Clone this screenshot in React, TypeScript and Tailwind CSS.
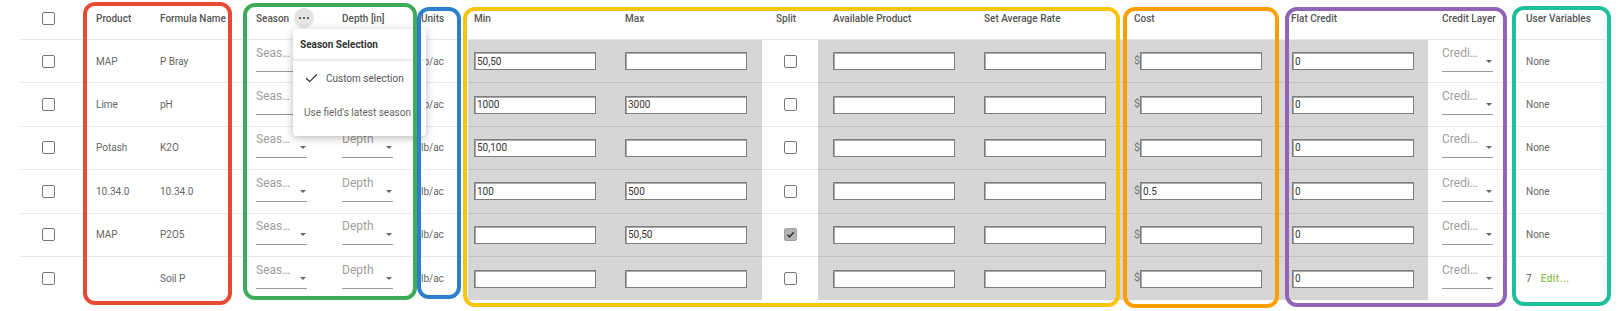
import { Check } from "lucide-react";

type Row = {
  product: string;
  formula: string;
  min: string;
  max: string;
  split: boolean;
  cost: string;
  vars: string;
};

const rows: Row[] = [
  { product: "MAP", formula: "P Bray", min: "50,50", max: "", split: false, cost: "", vars: "None" },
  { product: "Lime", formula: "pH", min: "1000", max: "3000", split: false, cost: "", vars: "None" },
  { product: "Potash", formula: "K2O", min: "50,100", max: "", split: false, cost: "", vars: "None" },
  { product: "10.34.0", formula: "10.34.0", min: "100", max: "500", split: false, cost: "0.5", vars: "None" },
  { product: "MAP", formula: "P2O5", min: "", max: "50,50", split: true, cost: "", vars: "None" },
  { product: "", formula: "Soil P", min: "", max: "", split: false, cost: "", vars: "edit" },
];

function Box({ checked }: { checked?: boolean }) {
  if (checked) {
    return (
      <div className="w-[13px] h-[13px] rounded-[2px] bg-[#b3b3b3] border border-[#a0a0a0] flex items-center justify-center">
        <svg width="9" height="9" viewBox="0 0 10 10">
          <path d="M1.5 5.2 L4 7.6 L8.6 2.4" fill="none" stroke="#333" strokeWidth="1.6" />
        </svg>
      </div>
    );
  }
  return <div className="w-[13px] h-[13px] rounded-[2px] border-[1.5px] border-[#777] bg-white" />;
}

function Field({ value }: { value: string }) {
  return (
    <input
      readOnly
      value={value}
      className="w-[122px] h-[18px] bg-white border border-[#7d7d7d] shadow-[inset_1px_1px_0_#a8a8a8] px-[2px] text-[10px] text-[#333] outline-none font-['Roboto']"
    />
  );
}

function Select({ label }: { label: string }) {
  return (
    <div className="relative w-[51px] h-[26px] border-b border-[#9a9a9a] mb-[5px]">
      <span className="block w-[37px] truncate text-[12px] leading-[14px] text-[#9e9e9e]">{label}</span>
      <span className="absolute right-[1px] bottom-[8px] w-0 h-0 border-x-[3px] border-x-transparent border-t-[3.5px] border-t-[#666]" />
    </div>
  );
}

export default function App() {
  const line = "border-b border-black/[0.09]";
  return (
    <div className="relative w-[1619px] h-[311px] bg-white font-['Roboto'] overflow-hidden">
      <div className="pl-[20px]">
        {/* header */}
        <div className="flex h-[40px] text-[10px] font-medium text-[#555]">
          <div className={`w-[68px] pl-[22px] pb-[2px] flex items-center ${line}`}>
            <Box />
          </div>
          <div className={`w-[64px] pl-[8px] pb-[3px] flex items-center ${line}`}>Product</div>
          <div className={`w-[96px] pl-[8px] pb-[3px] flex items-center ${line}`}>Formula Name</div>
          <div className={`w-[86px] pl-[8px] pb-[3px] flex items-center gap-[5px] ${line}`}>
            Season
            <span className="w-[20px] h-[20px] rounded-full bg-[#e4e4e4] flex items-center justify-center gap-[1.5px]">
              <span className="w-[2.5px] h-[2.5px] rounded-full bg-[#333]" />
              <span className="w-[2.5px] h-[2.5px] rounded-full bg-[#333]" />
              <span className="w-[2.5px] h-[2.5px] rounded-full bg-[#333]" />
            </span>
          </div>
          <div className={`w-[82px] pl-[8px] pb-[3px] flex items-center ${line}`}>Depth [in]</div>
          <div className={`w-[52px] pl-[5px] pb-[3px] flex items-center ${line}`}>Units</div>
          <div className={`w-[149px] pl-[6px] pb-[3px] flex items-center ${line}`}>Min</div>
          <div className={`w-[145px] pl-[8px] pb-[3px] flex items-center ${line}`}>Max</div>
          <div className={`w-[56px] pl-[14px] pb-[3px] flex items-center ${line}`}>Split</div>
          <div className={`w-[151px] pl-[15px] pb-[3px] flex items-center ${line}`}>Available Product</div>
          <div className={`w-[151px] pl-[15px] pb-[3px] flex items-center ${line}`}>Set Average Rate</div>
          <div className={`w-[158px] pl-[14px] pb-[3px] flex items-center ${line}`}>Cost</div>
          <div className={`w-[150px] pl-[13px] pb-[3px] flex items-center ${line}`}>Flat Credit</div>
          <div className={`w-[82px] pl-[14px] pb-[3px] flex items-center ${line}`}>Credit Layer</div>
          <div className={`w-[96px] pl-[16px] pb-[3px] flex items-center ${line}`}>User Variables</div>
        </div>

        {rows.map((r, i) => {
          const b = i === rows.length - 1 ? "" : line;
          return (
            <div key={i} className="flex h-[43.4px] text-[10px] text-[#666]">
              <div className={`w-[68px] pl-[22px] flex items-center ${b}`}>
                <Box />
              </div>
              <div className={`w-[64px] pl-[8px] flex items-center ${b}`}>{r.product}</div>
              <div className={`w-[96px] pl-[8px] flex items-center ${b}`}>{r.formula}</div>
              <div className={`w-[86px] pl-[8px] flex items-center ${b}`}>
                <Select label="Season" />
              </div>
              <div className={`w-[82px] pl-[8px] flex items-center ${b}`}>
                <Select label="Depth" />
              </div>
              <div className={`w-[52px] pl-[5px] flex items-center ${b}`}>lb/ac</div>
              <div className={`w-[149px] pl-[6px] flex items-center bg-[#d6d6d6] ${b}`}>
                <Field value={r.min} />
              </div>
              <div className={`w-[145px] pl-[8px] flex items-center bg-[#d6d6d6] ${b}`}>
                <Field value={r.max} />
              </div>
              <div className={`w-[56px] flex items-center justify-center ${b}`}>
                <Box checked={r.split} />
              </div>
              <div className={`w-[151px] pl-[15px] flex items-center bg-[#d6d6d6] ${b}`}>
                <Field value="" />
              </div>
              <div className={`w-[151px] pl-[15px] flex items-center bg-[#d6d6d6] ${b}`}>
                <Field value="" />
              </div>
              <div className={`w-[158px] pl-[14px] flex items-center bg-[#d6d6d6] ${b}`}>
                <span className="w-[6px] text-[11px] text-[#777]">$</span>
                <Field value={r.cost} />
              </div>
              <div className={`w-[150px] pl-[14px] flex items-center bg-[#d6d6d6] ${b}`}>
                <Field value="0" />
              </div>
              <div className={`w-[82px] pl-[14px] flex items-center ${b}`}>
                <Select label="Credit Layer" />
              </div>
              <div className={`w-[96px] pl-[16px] flex items-center ${b}`}>
                {r.vars === "edit" ? (
                  <span className="flex items-center gap-[9px]">
                    <span className="text-[#555]">7</span>
                    <span className="text-[#8bc34a] font-medium tracking-[0.5px]">Edit...</span>
                  </span>
                ) : (
                  r.vars
                )}
              </div>
            </div>
          );
        })}
      </div>

      {/* season selection menu */}
      <div className="absolute left-[293px] top-[29px] w-[133px] h-[107px] bg-white rounded-[4px] shadow-[0_2px_8px_rgba(0,0,0,0.28)] z-10">
        <div className="h-[32px] pl-[7px] pt-[1px] flex items-center text-[10px] font-bold text-[#333] border-b-2 border-[#ececec]">
          Season Selection
        </div>
        <div className="h-[34px] pl-[11px] flex items-center gap-[7px] text-[10px] text-[#555]">
          <Check size={15} strokeWidth={2} className="text-[#333]" />
          Custom selection
        </div>
        <div className="h-[34px] pl-[11px] flex items-center text-[10px] text-[#666] whitespace-nowrap">
          Use field's latest season
        </div>
      </div>

      {/* annotation boxes */}
      <div className="absolute z-20 left-[83px] top-[2px] w-[149px] h-[303px] border-4 border-[#e64a35] rounded-[12px]" />
      <div className="absolute z-20 left-[243px] top-[3px] w-[174px] h-[297px] border-4 border-[#3dab58] rounded-[12px]" />
      <div className="absolute z-20 left-[417px] top-[7px] w-[44px] h-[292px] border-4 border-[#2b7fcb] rounded-[12px]" />
      <div className="absolute z-20 left-[463px] top-[7px] w-[657px] h-[300px] border-4 border-[#fbc40c] rounded-[12px]" />
      <div className="absolute z-20 left-[1123px] top-[7px] w-[156px] h-[301px] border-4 border-[#fd9f00] rounded-[12px]" />
      <div className="absolute z-20 left-[1285px] top-[7px] w-[222px] h-[300px] border-4 border-[#9064b7] rounded-[12px]" />
      <div className="absolute z-20 left-[1512px] top-[6px] w-[99px] h-[300px] border-4 border-[#1ebf9b] rounded-[12px]" />
    </div>
  );
}
